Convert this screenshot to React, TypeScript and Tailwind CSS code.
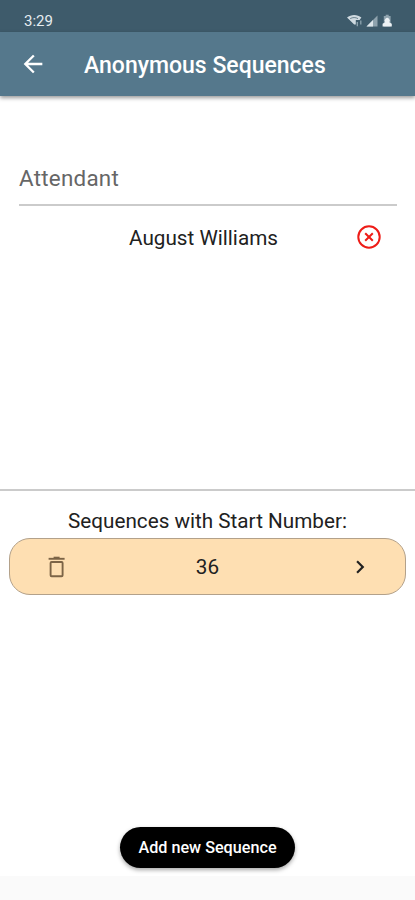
import { useState } from "react";
import { MdArrowBack, MdChevronRight } from "react-icons/md";

function StatusIcons() {
  return (
    <svg width="48" height="14" viewBox="0 0 48 14" fill="none">
      <path d="M1 3.6C5 0.2 11.4 0.2 15.4 3.6L13.6 6H9.8V10.4L8.2 10.6Z" fill="#cfdae0" />
      <path d="M4.2 4.6c2.4-1.4 5.4-1.4 7.8 0" stroke="#6b828e" strokeWidth="1" />
      <path d="M11.3 8v4.2M14.8 6.4v4.2" stroke="#8fa5b0" strokeWidth="1.3" />
      <path d="M31.5 1.5v11H20.5Z" fill="#8fa3ae" />
      <path d="M27 6v6.5h-6.5Z" fill="#dce5ea" />
      <path d="M37.8 2h1.9V.8h3V2h1.9v10.5h-6.8Z" fill="#8fa3ae" />
      <path d="M36.6 12.5V9.7l2.6-1.5a2.6 2.6 0 1 1 4 0l2.6 1.5v2.8Z" fill="#edf2f5" />
    </svg>
  );
}

function TrashIcon() {
  return (
    <svg width="18" height="22" viewBox="0 0 18 22" fill="none" stroke="#7c6446" strokeWidth="1.9">
      <path d="M.6 2.8h16" />
      <path d="M5.6 1.4h6" strokeWidth="1.4" />
      <rect x="2.6" y="6" width="12" height="14.2" rx="1" />
    </svg>
  );
}

function RemoveIcon() {
  return (
    <svg width="24" height="24" viewBox="0 0 24 24" fill="none" stroke="#ee1c17" strokeWidth="2">
      <circle cx="12" cy="12" r="10.7" />
      <path d="M8.2 8.2l7.6 7.6M15.8 8.2l-7.6 7.6" />
    </svg>
  );
}

export default function App() {
  const [attendant] = useState("August Williams");
  const [sequences] = useState([36]);

  return (
    <div className="flex h-[900px] w-[415px] flex-col overflow-hidden bg-[#fafafa] font-[Roboto,sans-serif] text-[#212121]">
      <div className="flex h-8 shrink-0 items-center justify-between bg-[#3e5b6b] pt-[9px] pr-[21px] pl-6 text-[15px] text-[#e6edf1]">
        <span className="pt-px">3:29</span>
        <StatusIcons />
      </div>
      <header className="z-10 flex h-16 shrink-0 items-center bg-[#55788c] pl-[19px] text-white shadow-[0_2px_4px_rgba(0,0,0,0.4)]">
        <button aria-label="Back">
          <MdArrowBack size={28} />
        </button>
        <h1 className="ml-[37px] pt-[5px] text-[23px] font-medium whitespace-nowrap">Anonymous Sequences</h1>
      </header>

      <main className="flex h-[780px] shrink-0 flex-col bg-white">
        <section className="flex h-[395px] shrink-0 flex-col border-b-2 border-[#cbcbcb] pt-[64px] pr-[18px] pl-[19px]">
          <div className="flex h-[46px] items-center border-b-2 border-[#cbcbcb] pb-[6px] text-[22.4px] tracking-[0.25px] text-[#666666]">
            <span>Attendant</span>
          </div>
          <div className="grid h-[62px] grid-cols-[110px_149px_1fr] items-center">
            <span />
            <span className="pt-[3px] text-center text-[20.7px] whitespace-nowrap">{attendant}</span>
            <button className="ml-[79px]" aria-label="Remove attendant">
              <RemoveIcon />
            </button>
          </div>
        </section>

        <section className="flex flex-1 flex-col px-[9px] pt-[16px]">
          <h2 className="h-[31px] text-center text-[20.7px] leading-[28px]">Sequences with Start Number:</h2>
          {sequences.map((n) => (
            <div
              key={n}
              className="flex h-[57px] items-center justify-between rounded-[21px] border border-[#b3a18a] bg-[#fedfb2] pr-[32px] pl-[38px]"
            >
              <button className="w-[26px]" aria-label="Delete">
                <TrashIcon />
              </button>
              <span className="mr-[6px] pt-[2px] text-[20.7px]">{n}</span>
              <MdChevronRight size={26} />
            </div>
          ))}
          <button className="mt-auto mb-[8px] h-[41px] w-[175px] self-center rounded-full bg-black pt-[2px] text-[16.2px] font-medium whitespace-nowrap text-white shadow-[0_2px_4px_rgba(0,0,0,0.35)]">
            Add new Sequence
          </button>
        </section>
      </main>
    </div>
  );
}
